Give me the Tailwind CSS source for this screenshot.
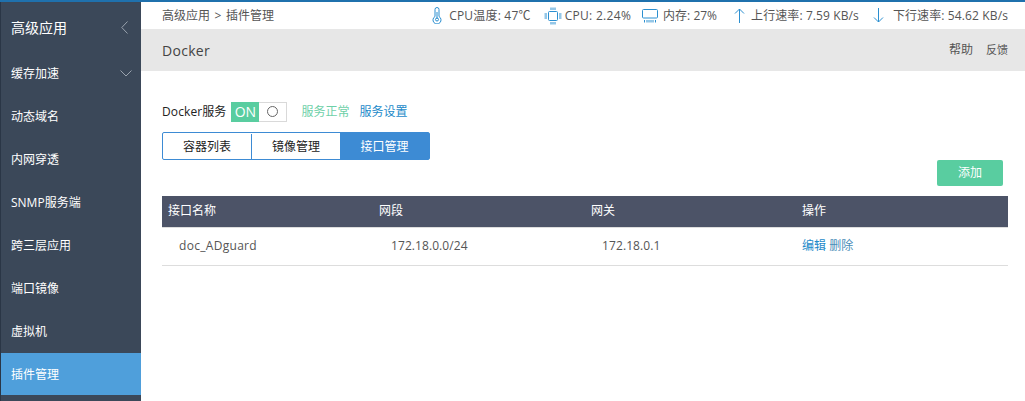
<!DOCTYPE html>
<html lang="zh-CN">
<head>
<meta charset="UTF-8">
<title>Docker</title>
<script src="https://cdn.jsdelivr.net/npm/@tailwindcss/browser@4"></script>
</head>
<body class="h-[401px] w-[1025px] overflow-hidden bg-white font-['Open_Sans','Noto_Sans_CJK_SC',sans-serif] text-[12px] text-[#555]">
<div class="h-[2px] bg-[#1f71ad]"></div>
<div class="flex h-[399px]">
  <!-- sidebar -->
  <aside class="w-[141px] shrink-0 border-l border-[#2a3646] bg-[#3b4859] text-white">
    <div class="flex h-[50px] items-center justify-between pl-[10px] pr-[13px] text-[14px]">
      <span>高级应用</span>
      <svg width="7" height="13" viewBox="0 0 7 13" fill="none" stroke="#9aa3ae"><path d="M6.500 .5 .8 6.500l5.700 6"/></svg>
    </div>
    <div class="flex h-[43px] items-center justify-between pl-[10px] pr-[9px]">
      <span>缓存加速</span>
      <svg width="12" height="7" viewBox="0 0 12 7" fill="none" stroke="#9aa3ae"><path d="m.5.5 5.500 5.500L11.500.5"/></svg>
    </div>
    <div class="flex h-[43px] items-center pl-[10px]">动态域名</div>
    <div class="flex h-[43px] items-center pl-[10px]">内网穿透</div>
    <div class="flex h-[43px] items-center pl-[10px]">SNMP服务端</div>
    <div class="flex h-[43px] items-center pl-[10px]">跨三层应用</div>
    <div class="flex h-[43px] items-center pl-[10px]">端口镜像</div>
    <div class="flex h-[43px] items-center pl-[10px]">虚拟机</div>
    <div class="flex h-[42px] items-center bg-[#4f9fdb] pl-[10px] pt-px">插件管理</div>
  </aside>

  <main class="min-w-0 flex-1">
    <!-- status bar -->
    <div class="flex h-[27px] items-center justify-between pl-[21px] pr-[17px]">
      <span class="flex gap-[4.500px]"><span>高级应用</span><span>&gt;</span><span>插件管理</span></span>
      <div class="flex items-center">
        <svg class="mr-[7px]" width="10" height="17" viewBox="0 0 10 17" fill="none" stroke="#2b8fd0"><path d="M3 9.500V2.500a2 2 0 0 1 4 0v7a4 4 0 1 1-4 0Z"/><path d="M5 5v7"/><circle cx="5" cy="12.500" r="1.500"/></svg>
        <span class="tracking-[0.2px]">CPU温度: 47℃</span>
        <svg class="ml-[13px] mr-[3px]" width="18" height="18" viewBox="0 0 18 18" fill="none" stroke="#2b8fd0"><rect x="4.500" y="4.500" width="9" height="9" rx="1"/><path d="M7 .5v2.500M9 .5v2.500M11 .5v2.500M7 15v2.500M9 15v2.500M11 15v2.500M.5 7H3M.5 9H3M.5 11H3M15 7h2.500M15 9h2.500M15 11h2.500"/></svg>
        <span class="tracking-[0.3px]">CPU: 2.24%</span>
        <svg class="ml-[11px] mr-[5px]" width="16" height="14" viewBox="0 0 16 14" fill="none" stroke="#2b8fd0"><rect x=".5" y=".5" width="15" height="8.500" rx="1"/><path d="M2.500 11v2.500M5 11v2.500M7 11v2.500M9 11v2.500M11 11v2.500M13.500 11v2.500"/></svg>
        <span>内存: 27%</span>
        <svg class="ml-[17px] mr-[6px]" width="11" height="15" viewBox="0 0 11 15" fill="none" stroke="#2b8fd0"><path d="M5.500 15V1M1 5.500l4.500-4.500 4.500 4.500"/></svg>
        <span class="tracking-[0.1px]">上行速率: 7.59 KB/s</span>
        <svg class="ml-[14px] mr-[9px]" width="11" height="15" viewBox="0 0 11 15" fill="none" stroke="#2b8fd0"><path d="M5.500 0v14M1 9.500l4.500 4.500 4.500-4.500"/></svg>
        <span class="tracking-[0.12px]">下行速率: 54.62 KB/s</span>
      </div>
    </div>
    <!-- title bar -->
    <div class="flex h-[42px] items-center justify-between bg-[#e7e7e7] pl-[21px] pr-[17px]">
      <span class="text-[14px] tracking-[0.3px] text-[#444]">Docker</span>
      <div class="flex items-center gap-[13px] text-[11px]">
        <span class="text-[12px]">帮助</span>
        <span>反馈</span>
      </div>
    </div>

    <div class="pl-[21px] pr-[17px]">
      <div class="mt-[30px] flex h-[21px] items-center">
        <span class="tracking-[0.1px] text-[#222]">Docker服务</span>
        <div class="ml-[5px] flex h-[20px] w-[56px] border border-[#d9d9d9]">
          <span class="-my-px -ml-px flex w-[28px] items-center justify-center bg-[#59cda0] text-[14px] text-white">ON</span>
          <span class="flex flex-1 items-center justify-center"><span class="size-[11px] rounded-full border border-[#666]"></span></span>
        </div>
        <span class="ml-[14px] text-[#6ed0a8]">服务正常</span>
        <span class="ml-[10px] text-[#1d8ac9]">服务设置</span>
      </div>

      <div class="mt-[10px] flex h-[28px] w-[268px] rounded-[2px] border border-[#3d8bd4] pt-px text-[#222]">
        <span class="flex w-[89px] items-center justify-center border-r border-[#3d8bd4]">容器列表</span>
        <span class="flex w-[88px] items-center justify-center">镜像管理</span>
        <span class="-mt-px flex flex-1 items-center justify-center bg-[#3d8bd4] pt-px text-white">接口管理</span>
      </div>

      <div class="flex justify-end pr-[5px]">
        <button class="h-[26px] w-[66px] rounded-[2px] bg-[#59cda0] text-white">添加</button>
      </div>

      <table class="mt-[10px] w-[846px] table-fixed border-collapse text-left">
        <thead>
          <tr class="h-[31px] border-b border-[#ddd] bg-[#4c5367] text-white">
            <th class="w-[211px] pl-[6px] font-normal">接口名称</th>
            <th class="w-[212px] pl-[6px] font-normal">网段</th>
            <th class="w-[211px] pl-[6px] font-normal">网关</th>
            <th class="pl-[6px] font-normal">操作</th>
          </tr>
        </thead>
        <tbody>
          <tr class="h-[38px] border-b border-[#ddd]">
            <td class="pl-[17px] tracking-[0.3px]">doc_ADguard</td>
            <td class="pl-[18px] tracking-[0.08px]">172.18.0.0/24</td>
            <td class="pl-[17px] tracking-[0.1px]">172.18.0.1</td>
            <td class="pl-[6px]"><span class="text-[#1d8ac9]">编辑</span> <span class="text-[#4a8db8]">删除</span></td>
          </tr>
        </tbody>
      </table>
    </div>
  </main>
</div>
</body>
</html>
